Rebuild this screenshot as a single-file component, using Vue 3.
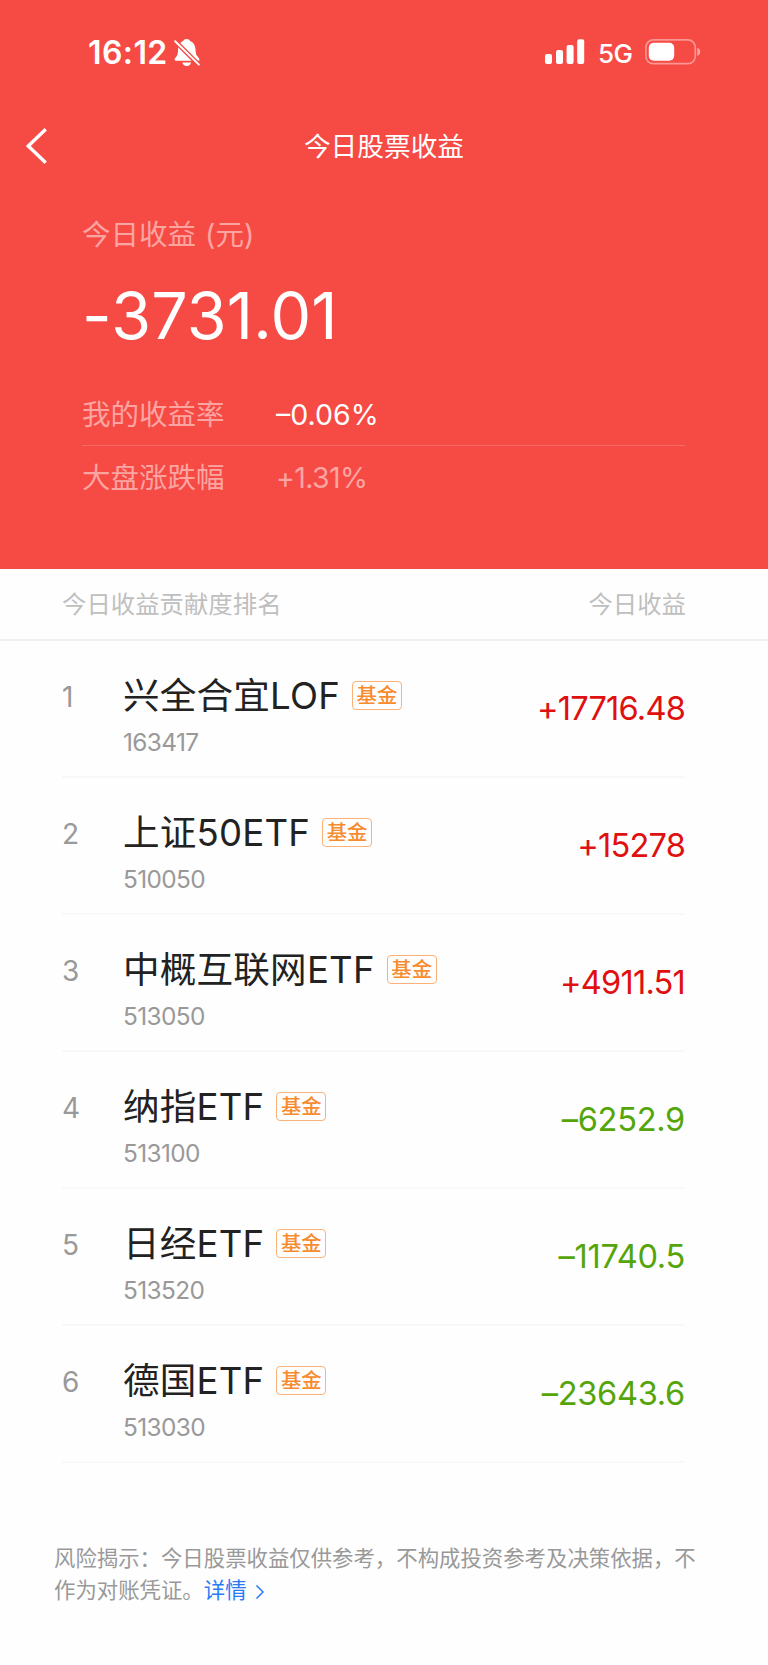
<template>
  <div class="page">
    <header class="hero">
      <div class="status">
        <span class="time">16:12</span>
        <svg class="bell" width="27" height="28" viewBox="0 0 27 28">
          <path d="M4.2 8.2 C5.2 4.8 7 2.4 9.3 2 C9.6 .7 10.9 0 12.6 0 C14.4 0 15.8 .7 16.1 2 C19.6 3.2 21.4 6.5 21.5 10.5 C21.6 14.5 22.3 16.3 24.2 18.2 C25.2 19.2 25.6 20.2 25.3 21.7 L1.6 21.7 C.7 21.7 .3 20.8 .8 19.8 C1.4 18.5 3.6 17.2 3.9 13.5 Z" fill="#fff" />
          <path d="M8.4 23.5 H17 C16.6 25.8 15.1 27 12.7 27 C10.3 27 8.8 25.8 8.4 23.5 Z" fill="#fff" />
          <path d="M-1 0 L26 27" stroke="#f64a45" stroke-width="4.6" />
          <path d="M1.1 2.2 L24.9 25.6" stroke="#fff" stroke-width="1.9" stroke-linecap="round" />
        </svg>
        <svg class="signal" width="40" height="26" viewBox="0 0 40 26">
          <rect x="0" y="15" width="7" height="10" rx="2" fill="#fff" />
          <rect x="11" y="11" width="7" height="14" rx="2" fill="#fff" />
          <rect x="21.6" y="6" width="7" height="19" rx="2" fill="#fff" />
          <rect x="32.2" y="0.2" width="7" height="24.8" rx="2" fill="#fff" />
        </svg>
        <span class="network">5G</span>
        <svg class="battery" width="56" height="26" viewBox="0 0 56 26">
          <rect x="0.9" y="0.9" width="49.4" height="23.8" rx="7.4" fill="none" stroke="#fff" stroke-opacity=".42" stroke-width="1.7" />
          <path d="M52.3 8.8 Q55.2 9.8 55.2 12.8 Q55.2 15.8 52.3 16.8 Z" fill="#fff" fill-opacity=".5" />
          <rect x="3.8" y="3.8" width="25.4" height="18" rx="5" fill="#fff" />
        </svg>
      </div>

      <div class="nav">
        <svg class="back" width="24" height="38" viewBox="0 0 24 38">
          <path d="M20.7 2.3 L3.3 19 L20.7 35.7" fill="none" stroke="#fff" stroke-width="3.4" />
        </svg>
        <h1>今日股票收益</h1>
      </div>

      <div class="summary">
        <div class="label">今日收益<span class="unit">(元)</span></div>
        <div class="amount">-3731.01</div>
        <div class="rate mine">
          <span class="label">我的收益率</span>
          <span class="percent">–0.06%</span>
        </div>
        <div class="rate market">
          <span class="label">大盘涨跌幅</span>
          <span class="percent">+1.31%</span>
        </div>
      </div>
    </header>

    <div class="list-head">
      <span>今日收益贡献度排名</span>
      <span>今日收益</span>
    </div>

    <ul class="list">
      <li v-for="(item, index) in stocks" :key="item.code">
        <span class="rank">{{ index + 1 }}</span>
        <div class="info">
          <div class="title">
            <span class="name">{{ item.name }}</span>
            <span class="tag">基金</span>
          </div>
          <div class="code">{{ item.code }}</div>
        </div>
        <span class="profit" :class="item.profit.startsWith('+') ? 'up' : 'down'">{{ item.profit }}</span>
      </li>
    </ul>

    <p class="notice">
      风险揭示：今日股票收益仅供参考，不构成投资参考及决策依据，不作为对账凭证。<a class="more">详情<svg width="10" height="16" viewBox="0 0 10 16">
        <path d="M1.5 1.5 L8 8 L1.5 14.5" fill="none" stroke="#2a7cf6" stroke-width="1.5" />
      </svg></a>
    </p>
  </div>
</template>

<script setup>
import { ref } from "vue"

const stocks = ref([
  { name: "兴全合宜LOF", code: "163417", profit: "+17716.48" },
  { name: "上证50ETF", code: "510050", profit: "+15278" },
  { name: "中概互联网ETF", code: "513050", profit: "+4911.51" },
  { name: "纳指ETF", code: "513100", profit: "–6252.9" },
  { name: "日经ETF", code: "513520", profit: "–11740.5" },
  { name: "德国ETF", code: "513030", profit: "–23643.6" }
])
</script>

<style>
body {
  margin: 0;
  background: #fefefe;
}
</style>

<style scoped>
.page {
  width: 768px;
  height: 1665px;
  overflow: hidden;
  background: #fefefe;
  font-family: Inter, "Noto Sans CJK SC", sans-serif;
  font-weight: 380;
}

.hero {
  box-sizing: border-box;
  height: 569px;
  background: #f64a45;
  color: #fff;
}

.status {
  display: flex;
  height: 104px;
  box-sizing: border-box;
  padding: 39px 67px 0 88px;
  align-items: flex-start;
}

.time {
  width: 86px;
  font-size: 32px;
  font-weight: 600;
  line-height: 28px;
  letter-spacing: 0.4px;
}

.signal {
  margin-left: auto;
}

.network {
  width: 47px;
  padding-left: 13px;
  font-size: 26px;
  font-weight: 480;
  line-height: 29px;
  letter-spacing: -0.6px;
}

.battery {
  flex: none;
}

.nav {
  display: grid;
  grid-template-columns: 50px 1fr 50px;
  align-items: center;
  height: 83px;
}

.back {
  margin-left: 25px;
}

h1 {
  margin: 0;
  font-size: 26.7px;
  font-weight: 380;
  text-align: center;
  line-height: 40px;
}

.summary {
  padding: 28px 83px 0 82px;
}

.label {
  font-size: 28.5px;
  line-height: 40px;
  color: #fba5a2;
}

.unit {
  margin-left: 9px;
}

.amount {
  margin-top: 26px;
  font-size: 64.5px;
  font-weight: 400;
  line-height: 70px;
  letter-spacing: 0.2px;
}

.rate {
  display: flex;
  align-items: center;
}

.rate .label {
  width: 194px;
}

.mine {
  height: 60px;
  margin-top: 34px;
  border-bottom: 1px solid #f86965;
}

.market {
  height: 63px;
}

.percent {
  font-size: 28.5px;
  line-height: 40px;
}

.market .percent {
  color: #fba5a2;
  letter-spacing: -0.6px;
}

.list-head {
  display: flex;
  justify-content: space-between;
  padding: 0 82px 0 62px;
  height: 70px;
  line-height: 71px;
  border-bottom: 2px solid #f0f0f0;
  font-size: 24.4px;
  color: #bfbfbf;
}

.list {
  list-style: none;
  margin: 0;
  padding: 0 83px 0 62px;
}

li {
  display: flex;
  box-sizing: border-box;
  height: 137px;
  border-bottom: 2px solid #f8f8f8;
}

li:first-child {
  height: 137.4px;
}

.rank {
  width: 61px;
  margin-top: 37px;
  font-size: 28px;
  line-height: 39px;
  color: #999;
}

.info {
  flex: 1;
}

.title {
  display: flex;
  align-items: center;
  height: 50px;
  margin-top: 30px;
}

.name {
  font-size: 36.6px;
  line-height: 50px;
  letter-spacing: 0.2px;
  color: #222;
}

.tag {
  box-sizing: border-box;
  width: 50px;
  height: 29px;
  margin: -2px 0 0 12px;
  border: 1px solid #fbb278;
  border-radius: 4px;
  font-size: 20.4px;
  font-weight: 500;
  line-height: 28px;
  text-align: center;
  color: #f78b2d;
}

.code {
  margin-top: 5px;
  font-size: 24.4px;
  line-height: 32px;
  letter-spacing: -0.6px;
  color: #999;
}

.profit {
  margin-top: 47px;
  font-size: 32.6px;
  line-height: 40px;
}

.up {
  letter-spacing: -0.8px;
  color: #e01010;
}

.down {
  letter-spacing: -0.3px;
  color: #55a50a;
}

.notice {
  margin: 79px 60px 0 54px;
  font-size: 21.4px;
  line-height: 32px;
  color: #999;
}

.more {
  color: #2a7cf6;
}

.more svg {
  margin-left: 8px;
  vertical-align: -2px;
}
</style>
